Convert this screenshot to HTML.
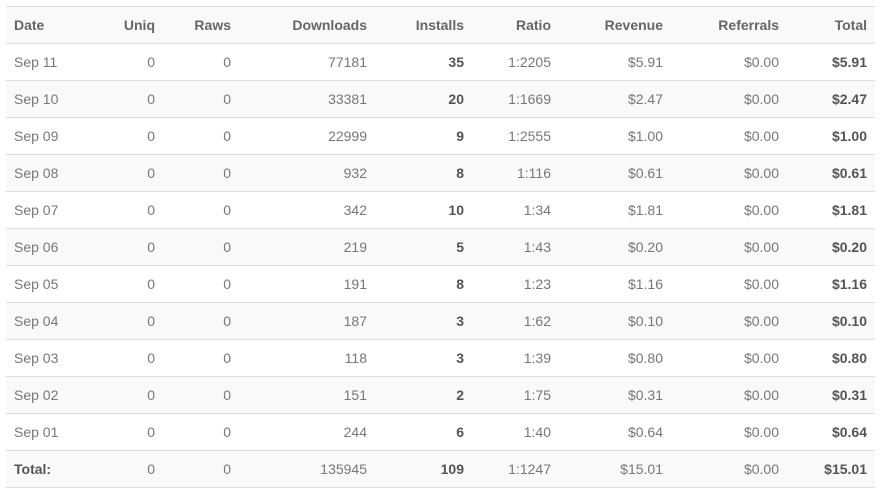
<!DOCTYPE html>
<html><head><meta charset="utf-8"><style>
body{margin:0;background:#fff;font-family:"Liberation Sans",sans-serif;}
table{position:absolute;left:6px;top:6px;width:869px;border-collapse:collapse;table-layout:fixed;font-size:14px;color:#777;}
td,th{height:36px;border-top:1px solid #ddd;padding:0 8px 0 0;text-align:right;white-space:nowrap;}
th{color:#666;font-weight:bold;}
tr:nth-child(odd){background:#f9f9f9;}
tr:nth-child(even){background:#fff;}
td:first-child,th:first-child{text-align:left;padding-left:8px;}
b{color:#555;}
tr:last-child td{border-bottom:1px solid #ddd;}
</style></head><body>
<table>
<colgroup><col style="width:100px"><col style="width:57px"><col style="width:76px"><col style="width:136px"><col style="width:97px"><col style="width:87px"><col style="width:112px"><col style="width:116px"><col style="width:88px"></colgroup>
<tr><th>Date</th><th>Uniq</th><th>Raws</th><th>Downloads</th><th>Installs</th><th>Ratio</th><th>Revenue</th><th>Referrals</th><th>Total</th></tr>
<tr><td>Sep 11</td><td>0</td><td>0</td><td>77181</td><td><b>35</b></td><td>1:2205</td><td>$5.91</td><td>$0.00</td><td><b>$5.91</b></td></tr>
<tr><td>Sep 10</td><td>0</td><td>0</td><td>33381</td><td><b>20</b></td><td>1:1669</td><td>$2.47</td><td>$0.00</td><td><b>$2.47</b></td></tr>
<tr><td>Sep 09</td><td>0</td><td>0</td><td>22999</td><td><b>9</b></td><td>1:2555</td><td>$1.00</td><td>$0.00</td><td><b>$1.00</b></td></tr>
<tr><td>Sep 08</td><td>0</td><td>0</td><td>932</td><td><b>8</b></td><td>1:116</td><td>$0.61</td><td>$0.00</td><td><b>$0.61</b></td></tr>
<tr><td>Sep 07</td><td>0</td><td>0</td><td>342</td><td><b>10</b></td><td>1:34</td><td>$1.81</td><td>$0.00</td><td><b>$1.81</b></td></tr>
<tr><td>Sep 06</td><td>0</td><td>0</td><td>219</td><td><b>5</b></td><td>1:43</td><td>$0.20</td><td>$0.00</td><td><b>$0.20</b></td></tr>
<tr><td>Sep 05</td><td>0</td><td>0</td><td>191</td><td><b>8</b></td><td>1:23</td><td>$1.16</td><td>$0.00</td><td><b>$1.16</b></td></tr>
<tr><td>Sep 04</td><td>0</td><td>0</td><td>187</td><td><b>3</b></td><td>1:62</td><td>$0.10</td><td>$0.00</td><td><b>$0.10</b></td></tr>
<tr><td>Sep 03</td><td>0</td><td>0</td><td>118</td><td><b>3</b></td><td>1:39</td><td>$0.80</td><td>$0.00</td><td><b>$0.80</b></td></tr>
<tr><td>Sep 02</td><td>0</td><td>0</td><td>151</td><td><b>2</b></td><td>1:75</td><td>$0.31</td><td>$0.00</td><td><b>$0.31</b></td></tr>
<tr><td>Sep 01</td><td>0</td><td>0</td><td>244</td><td><b>6</b></td><td>1:40</td><td>$0.64</td><td>$0.00</td><td><b>$0.64</b></td></tr>
<tr><td><b>Total:</b></td><td>0</td><td>0</td><td>135945</td><td><b>109</b></td><td>1:1247</td><td>$15.01</td><td>$0.00</td><td><b>$15.01</b></td></tr>
</table>
</body></html>
